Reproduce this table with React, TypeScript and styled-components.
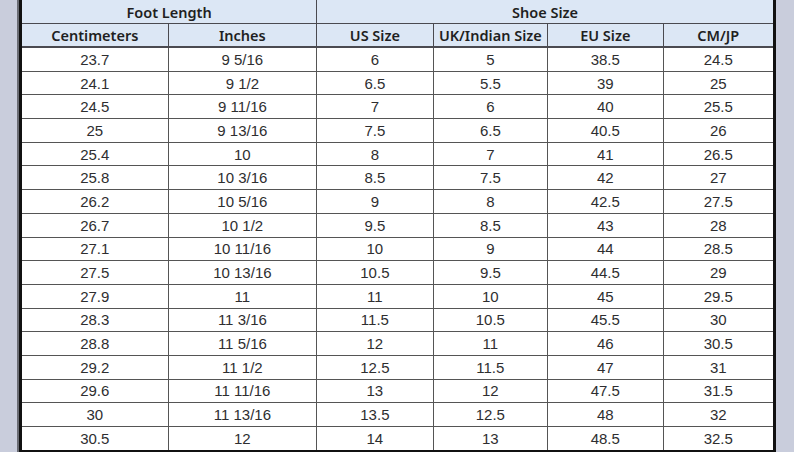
import React from 'react';
import styled, { createGlobalStyle } from 'styled-components';

const GlobalStyle = createGlobalStyle`
    html, body {
        margin: 0;
        padding: 0;
        background: #c9cddc;
        overflow: hidden;
    }
`;

const Page = styled.div`
    width: 794px;
    height: 452px;
    display: flex;
    padding-left: 17px;
    box-sizing: border-box;
`;

const Frame = styled.div`
    width: 759px;
    height: 452px;
    border-left: 2px solid #6a6c74;
    box-sizing: border-box;
`;

const Table = styled.table`
    width: 757px;
    border-collapse: collapse;
    table-layout: fixed;
    border: 3px solid #111;
    border-top: none;
    background: #fff;
    font-family: 'Liberation Sans', Arial, sans-serif;
`;

const HeadCell = styled.th<{ $group?: boolean }>`
    background: #dce7f5;
    height: ${(p) => (p.$group ? '23px' : '22px')};
    padding: 0;
    font-family: 'Noto Sans', 'Open Sans', sans-serif;
    font-weight: 600;
    font-size: 14.5px;
    color: #1f1f22;
    text-align: center;
    border-left: 1px solid #4a4a50;
    border-right: 1px solid #4a4a50;
    border-bottom: ${(p) => (p.$group ? '1px' : '2px')} solid #4a4a50;
    vertical-align: middle;
    white-space: nowrap;
`;

const Cell = styled.td`
    height: 22.7px;
    padding: 0;
    text-align: center;
    font-size: 15px;
    color: #2e2e30;
    border: 1px solid #555;
    vertical-align: middle;
`;

const columns = [147, 148, 116, 114, 115, 111];

const rows: string[][] = [
    ['23.7', '9 5/16', '6', '5', '38.5', '24.5'],
    ['24.1', '9 1/2', '6.5', '5.5', '39', '25'],
    ['24.5', '9 11/16', '7', '6', '40', '25.5'],
    ['25', '9 13/16', '7.5', '6.5', '40.5', '26'],
    ['25.4', '10', '8', '7', '41', '26.5'],
    ['25.8', '10 3/16', '8.5', '7.5', '42', '27'],
    ['26.2', '10 5/16', '9', '8', '42.5', '27.5'],
    ['26.7', '10 1/2', '9.5', '8.5', '43', '28'],
    ['27.1', '10 11/16', '10', '9', '44', '28.5'],
    ['27.5', '10 13/16', '10.5', '9.5', '44.5', '29'],
    ['27.9', '11', '11', '10', '45', '29.5'],
    ['28.3', '11 3/16', '11.5', '10.5', '45.5', '30'],
    ['28.8', '11 5/16', '12', '11', '46', '30.5'],
    ['29.2', '11 1/2', '12.5', '11.5', '47', '31'],
    ['29.6', '11 11/16', '13', '12', '47.5', '31.5'],
    ['30', '11 13/16', '13.5', '12.5', '48', '32'],
    ['30.5', '12', '14', '13', '48.5', '32.5'],
];

const headings = ['Centimeters', 'Inches', 'US Size', 'UK/Indian Size', 'EU Size', 'CM/JP'];

const App = () => {
    return (
        <>
            <GlobalStyle />
            <Page>
                <Frame>
                    <Table>
                        <colgroup>
                            {columns.map((w, i) => (
                                <col key={i} style={{ width: w }} />
                            ))}
                        </colgroup>
                        <thead>
                            <tr>
                                <HeadCell $group colSpan={2}>
                                    Foot Length
                                </HeadCell>
                                <HeadCell $group colSpan={4}>
                                    Shoe Size
                                </HeadCell>
                            </tr>
                            <tr>
                                {headings.map((h) => (
                                    <HeadCell key={h}>{h}</HeadCell>
                                ))}
                            </tr>
                        </thead>
                        <tbody>
                            {rows.map((r, i) => (
                                <tr key={i}>
                                    {r.map((v, j) => (
                                        <Cell key={j}>{v}</Cell>
                                    ))}
                                </tr>
                            ))}
                        </tbody>
                    </Table>
                </Frame>
            </Page>
        </>
    );
};

export default App;
